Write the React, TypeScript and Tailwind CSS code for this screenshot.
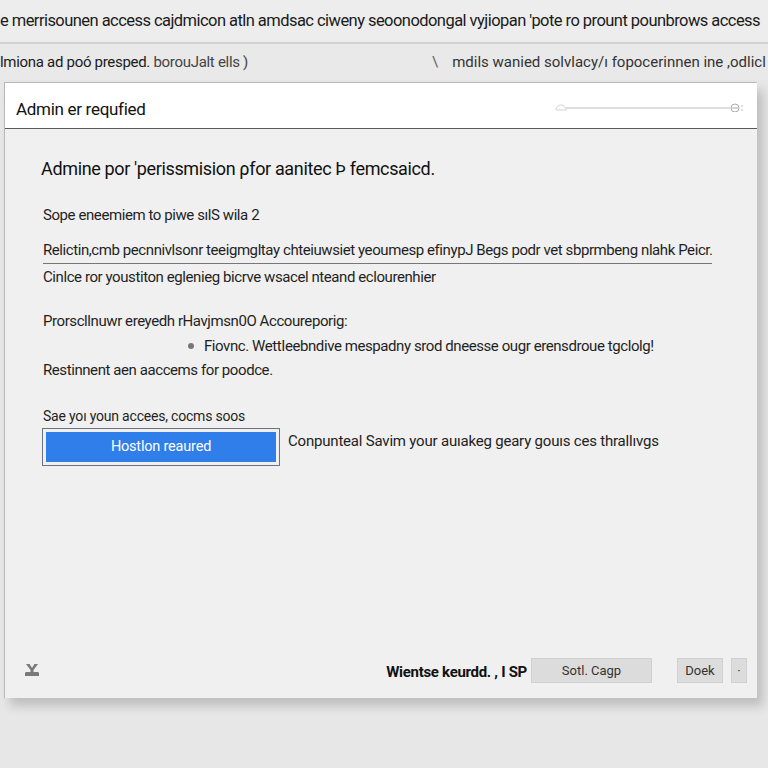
import React from "react";

function GrayButton({ label, className }: { label: string; className: string }) {
  return (
    <button
      className={`h-[25px] bg-[#dcdcdc] text-[13px] text-[#333] border border-[#d0d0d0] ${className}`}
    >
      {label}
    </button>
  );
}

export default function App() {
  return (
    <div
      className="w-[768px] h-[768px] overflow-hidden bg-[#e7e7e7] text-[#1a1a1a] flex flex-col"
      style={{ fontFamily: 'Roboto, "Noto Sans", sans-serif' }}
    >
      {/* top banner */}
      <div className="h-[42px] shrink-0 bg-[#ededed] flex items-center overflow-hidden whitespace-nowrap">
        <span className="text-[16.5px] tracking-[-0.55px]">
          e merrisounen access cajdmicon atln amdsac ciweny seoonodongal vyjiopan 'pote ro prount pounbrows access
        </span>
      </div>
      <div className="h-[2px] shrink-0 bg-[#d2d2d2]" />
      {/* sub bar */}
      <div className="h-[36px] shrink-0 bg-[#e9e9e9] flex items-center overflow-hidden whitespace-nowrap text-[15px] tracking-[-0.3px]">
        <span className="w-[432px] shrink-0">
          lmiona ad poó presped. <span className="text-[#444]">borouJalt ells )</span>
        </span>
        <span className="text-[#333] tracking-[0px]">
          <span className="mr-[14px] text-[#666]">\</span>mdils wanied solvlacy/ı fopocerinnen ine ,odlicl
        </span>
      </div>

      {/* dialog */}
      <div className="ml-[4px] mr-[11px] mt-[2px] h-[616px] flex flex-col border-t border-l border-[#b8b8b8] bg-[#f0f0f0] shadow-[6px_8px_10px_rgba(0,0,0,0.18)]">
        <div className="h-[46px] shrink-0 bg-white border-b border-[#5a5a5a] flex items-center justify-between px-[11px] pt-[8px]">
          <span className="text-[17px] tracking-[-0.3px] text-[#111]">Admin er requfied</span>
          <div className="flex items-center mr-[2px] mt-[-6px]">
            <svg width="190" height="10" viewBox="0 0 190 10">
              <path d="M2 8 a5 5 0 0 1 10 0 z" fill="none" stroke="#d4d4d4" strokeWidth="1" />
              <line x1="12" y1="6" x2="176" y2="6" stroke="#dedede" strokeWidth="2" />
              <circle cx="181" cy="6" r="4" fill="none" stroke="#aaa" strokeWidth="1" />
              <line x1="178" y1="6" x2="184" y2="6" stroke="#aaa" strokeWidth="1" />
              <line x1="187" y1="4" x2="189" y2="4" stroke="#bbb" strokeWidth="1" />
              <line x1="187" y1="8" x2="189" y2="8" stroke="#bbb" strokeWidth="1" />
            </svg>
          </div>
        </div>

        <div className="flex-1 flex flex-col pl-[36px] pr-[40px] text-[15px] leading-[24px] tracking-[-0.42px] text-[#1f1f1f]">
          <h1 className="mt-[26px] text-[18px] leading-[28px] tracking-[-0.35px] text-[#111]">
            Admine por 'perissmision ρfor aanitec Þ femcsaicd.
          </h1>
          <p className="mt-[20px] ml-[2px]">Sope eneemiem to piwe sılS wila 2</p>
          <p className="mt-[11px] ml-[2px] pb-[1px] border-b border-[#777] w-[669px] whitespace-nowrap">
            Relictin,cmb pecnnivlsonr teeigmgltay chteiuwsiet yeoumesp efinypJ Begs podr vet sbprmbeng nlahk Peicr.
          </p>
          <p className="mt-[1px] ml-[2px]">Cinlce ror youstiton eglenieg bicrve wsacel nteand eclourenhier</p>
          <p className="mt-[20px] ml-[2px]">Prorscllnuwr ereyedh rHavjmsn0O Accoureporig:</p>
          <div className="mt-[1px] ml-[147px] flex items-center gap-[10px]">
            <span className="w-[6px] h-[6px] rounded-full bg-[#777]" />
            <span>Fiovnc. WettIeebndive mespadny srod dneesse ougr erensdroue tgclolg!</span>
          </div>
          <p className="ml-[2px]">Restinnent aen aaccems for poodce.</p>

          <p className="mt-[22px] ml-[2px] text-[14px] tracking-[-0.2px]">Sae yoı youn accees, cocms soos</p>
          <div className="flex items-start ml-[1px]">
            <div className="w-[238px] h-[38px] shrink-0 border-[1.5px] border-[#6b7280] p-[3px]">
              <button className="w-full h-full bg-[#2f7ee9] text-white text-[14.5px] tracking-[-0.2px]">
                Hostlon reaured
              </button>
            </div>
            <span className="ml-[8px] mt-[1px] text-[15px] tracking-[-0.2px] text-[#222]">
              Conpunteal Savim your auıakeg geary gouıs ces thrallıvgs
            </span>
          </div>
        </div>

        <div className="h-[52px] shrink-0 flex items-start pl-[18px] pr-[10px] pt-[12px]">
          <svg width="18" height="18" viewBox="0 0 18 18" className="mt-[3px]">
            <path
              d="M3 3 L6.5 3 L9 7 L11.5 3 L15 3 L10.5 9 L10.5 11 L15 11 Q16 11 16 12.5 L16 15 L2 15 L2 12.5 Q2 11 3 11 L7.5 11 L7.5 9 Z"
              fill="#7a7a7a"
            />
          </svg>
          <div className="flex-1" />
          <span className="text-[15px] font-bold tracking-[-0.3px] mt-[3px] mr-[4px] text-[#111]">
            Wientse keurdd. , I SP
          </span>
          <GrayButton label="Sotl. Cagp" className="w-[121px]" />
          <GrayButton label="Doek" className="w-[46px] ml-[25px]" />
          <GrayButton label="·" className="w-[16px] ml-[8px]" />
        </div>
      </div>
    </div>
  );
}
